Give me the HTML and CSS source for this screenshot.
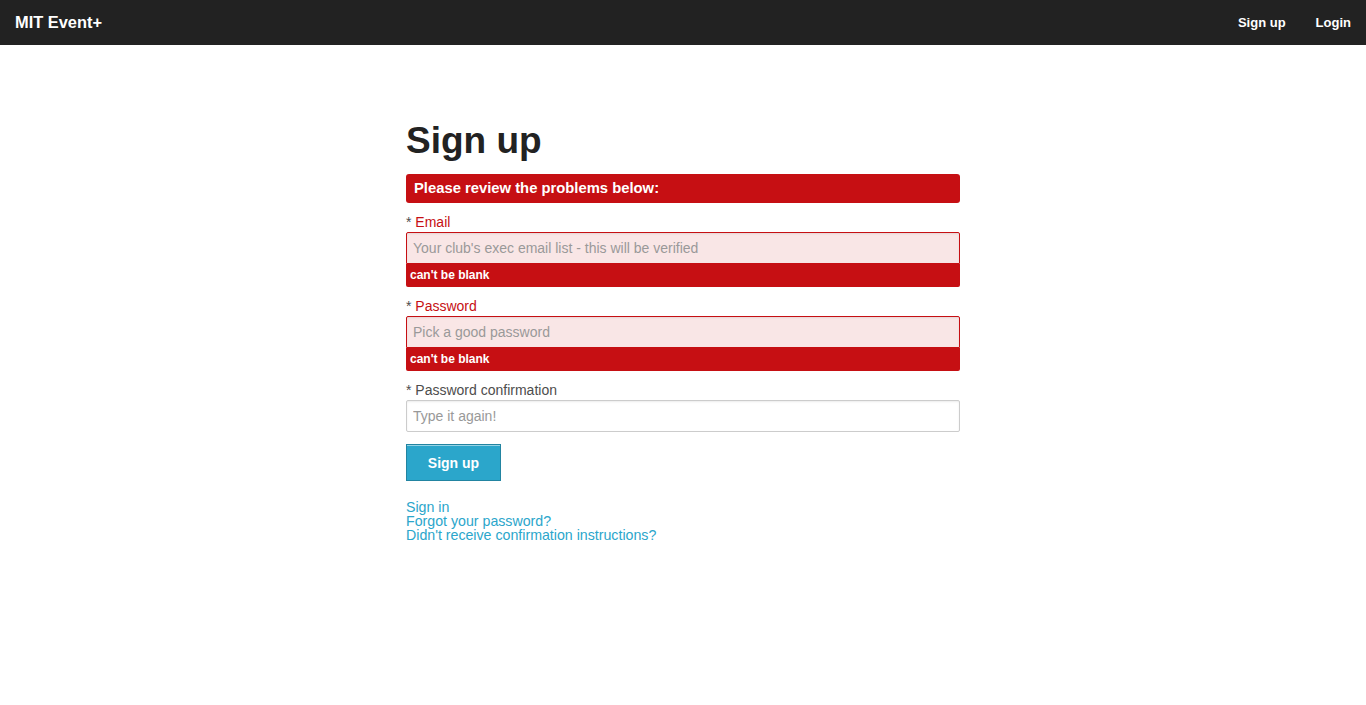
FILE: index.html
```html
<!DOCTYPE html>
<html>
<head>
<meta charset="utf-8">
<title>MIT Event+</title>
<link rel="stylesheet" href="styles.css">
</head>
<body>
<nav class="top-bar">
  <a class="brand" href="#">MIT Event+</a>
  <ul class="nav-links">
    <li><a href="#">Sign up</a></li>
    <li><a href="#">Login</a></li>
  </ul>
</nav>
<main class="container">
  <h1 class="title">Sign up</h1>
  <div class="alert">Please review the problems below:</div>
  <form class="form">
    <div class="field error">
      <label class="label"><abbr>*</abbr> Email</label>
      <input class="input" type="email" placeholder="Your club's exec email list - this will be verified">
      <small class="err-msg">can't be blank</small>
    </div>
    <div class="field error">
      <label class="label"><abbr>*</abbr> Password</label>
      <input class="input" type="password" placeholder="Pick a good password">
      <small class="err-msg">can't be blank</small>
    </div>
    <div class="field">
      <label class="label"><abbr>*</abbr> Password confirmation</label>
      <input class="input" type="password" placeholder="Type it again!">
    </div>
    <button class="button" type="button">Sign up</button>
  </form>
  <div class="links">
    <a href="#">Sign in</a><br>
    <a href="#">Forgot your password?</a><br>
    <a href="#">Didn't receive confirmation instructions?</a>
  </div>
</main>
</body>
</html>
```
FILE: styles.css
```css
* { box-sizing: border-box; }
html, body { margin: 0; padding: 0; background: #fff; }
body { font-family: "Liberation Sans", Arial, sans-serif; color: #222; }

.top-bar {
  height: 45px;
  background: #222;
  display: flex;
  align-items: center;
  justify-content: space-between;
}
.brand {
  color: #fff;
  font-weight: bold;
  font-size: 16.4px;
  text-decoration: none;
  padding-left: 15px;
  line-height: 45px;
}
.nav-links {
  list-style: none;
  margin: 0;
  padding: 0;
  display: flex;
}
.nav-links a {
  display: block;
  color: #fff;
  font-weight: bold;
  font-size: 13px;
  text-decoration: none;
  padding: 0 15px;
  line-height: 45px;
}

.container {
  width: 554px;
  margin: 74px auto 0;
}
.title {
  font-size: 37px;
  font-weight: bold;
  line-height: 44px;
  margin: 0 0 11px;
  color: #222;
}
.alert {
  background: #c60f13;
  color: #fff;
  font-weight: bold;
  font-size: 14.8px;
  line-height: 29px;
  height: 29px;
  padding: 0 8px;
  border-radius: 3px;
  margin-bottom: 10px;
}
.form { display: flex; flex-direction: column; }
.field { display: flex; flex-direction: column; margin-bottom: 10px; }
.field:last-of-type { margin-bottom: 12px; }
.label {
  font-size: 14px;
  line-height: 19px;
  color: #4d4d4d;
}
.label abbr { color: #4d4d4d; text-decoration: none; }
.field.error .label { color: #c60f13; }
.field.error .label abbr { color: #4d4d4d; }
.input {
  height: 32px;
  width: 100%;
  border: 1px solid #ccc;
  border-radius: 2px;
  padding: 0 6px;
  font-family: "Liberation Sans", Arial, sans-serif;
  font-size: 14px;
  color: #222;
  background: #fff;
  box-shadow: inset 0 1px 2px rgba(0,0,0,0.08);
  margin: 0;
  outline: none;
}
.input::placeholder { color: #999; }
.field.error .input {
  border-color: #c60f13;
  background: #f9e6e6;
  border-radius: 2px 2px 0 0;
}
.err-msg {
  display: block;
  background: #c60f13;
  color: #fff;
  font-weight: bold;
  font-size: 12px;
  line-height: 23px;
  height: 23px;
  padding: 0 4px;
  border-radius: 0 0 2px 2px;
}
.button {
  align-self: flex-start;
  height: 37px;
  width: 95px;
  padding: 0;
  background: #2ba6cb;
  border: 1px solid #2284a1;
  color: #fff;
  font-family: "Liberation Sans", Arial, sans-serif;
  font-weight: bold;
  font-size: 14px;
  box-shadow: inset 0 1px 0 rgba(255,255,255,0.5);
  cursor: pointer;
  margin: 0;
}
.links {
  margin-top: 19px;
  font-size: 14.2px;
  line-height: 14px;
}
.links a { color: #2ba6cb; text-decoration: none; }
```
